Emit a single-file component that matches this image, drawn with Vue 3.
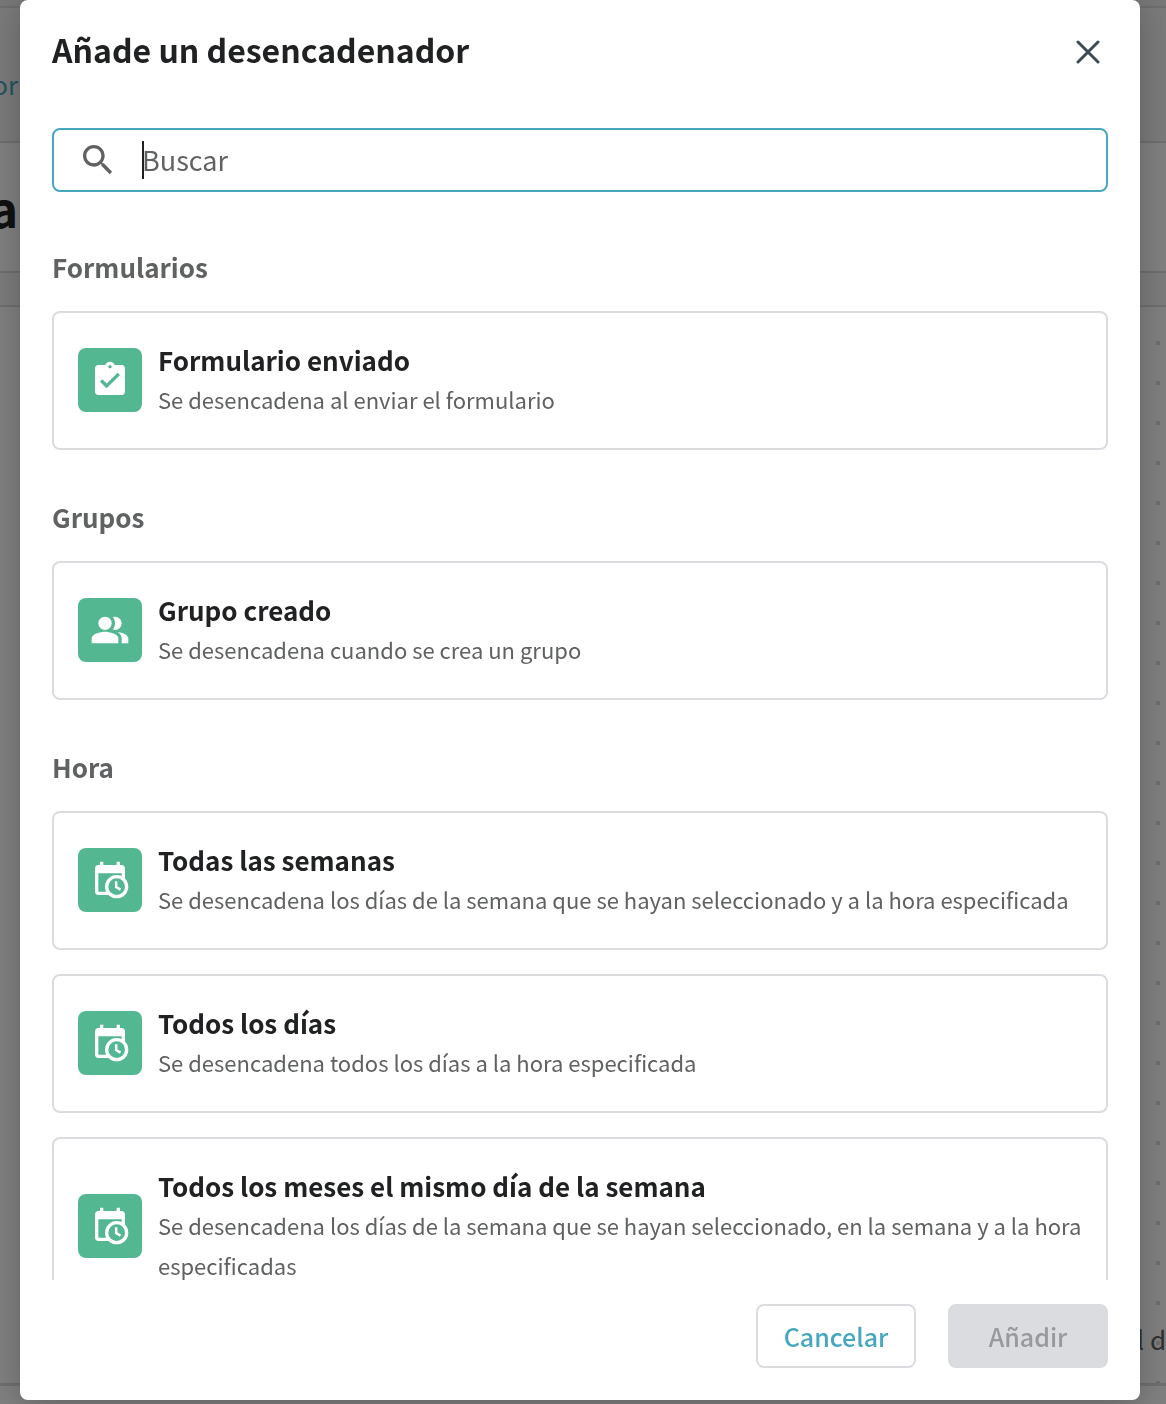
<template>
    <div class="page">
        <div class="strip"></div>
        <div class="topbar">
            <a class="crumb" href="#">or</a>
        </div>
        <div class="titlebar">
            <div class="page-title">a</div>
        </div>
        <div class="toolbar"></div>
        <div class="canvas">
            <p class="canvas-note">l d</p>
        </div>
        <div class="page-end"></div>
    </div>

    <div class="overlay">
        <section class="modal" role="dialog" aria-modal="true" aria-labelledby="modal-title">
            <header class="modal-header">
                <h1 id="modal-title">Añade un desencadenador</h1>
                <button class="close" type="button" aria-label="Cerrar">
                    <svg viewBox="0 0 24 24" width="24" height="24" aria-hidden="true">
                        <path d="M2 2L22 22M22 2L2 22" fill="none" stroke="currentColor" stroke-width="3" stroke-linecap="round" />
                    </svg>
                </button>
            </header>

            <label class="search">
                <svg class="search-icon" viewBox="0 0 24 24" width="40" height="40" aria-hidden="true">
                    <path fill="currentColor" d="M15.5 14h-.79l-.28-.27C15.41 12.59 16 11.11 16 9.5 16 5.91 13.09 3 9.5 3S3 5.91 3 9.5 5.91 16 9.5 16c1.61 0 3.09-.59 4.23-1.57l.27.28v.79l5 4.99L20.49 19l-4.99-5zm-6 0C7.01 14 5 11.99 5 9.5S7.01 5 9.5 5 14 7.01 14 9.5 11.99 14 9.5 14z" />
                </svg>
                <span class="caret"></span>
                <input v-model="query" type="text" placeholder="Buscar" aria-label="Buscar" />
            </label>

            <div class="list">
                <section v-for="group in groups" :key="group.name" class="group">
                    <h2>{{ group.name }}</h2>
                    <div class="cards">
                        <button v-for="item in group.items" :key="item.title" class="card" type="button">
                            <span class="tile">
                                <svg viewBox="0 0 24 24" width="40" height="40" fill="currentColor" aria-hidden="true">
                                    <path v-if="item.icon === 'form'" d="M19 3h-4.18C14.4 1.84 13.3 1 12 1c-1.3 0-2.4.84-2.82 2H5c-1.1 0-2 .9-2 2v14c0 1.1.9 2 2 2h14c1.1 0 2-.9 2-2V5c0-1.1-.9-2-2-2zm-7 0c.55 0 1 .45 1 1s-.45 1-1 1-1-.45-1-1 .45-1 1-1zm-2 14l-4-4 1.41-1.41L10 14.17l6.59-6.59L18 9l-8 8z" />
                                    <template v-else-if="item.icon === 'people'">
                                        <circle cx="9" cy="8" r="4" />
                                        <path d="M9 13c-2.67 0-8 1.34-8 4v3h16v-3c0-2.66-5.33-4-8-4z" />
                                        <path d="M15 12c2.21 0 4-1.79 4-4s-1.79-4-4-4c-.47 0-.91.1-1.33.24C14.5 5.27 15 6.58 15 8s-.5 2.73-1.33 3.76c.42.14.86.24 1.33.24z" />
                                        <path d="M16.67 13.13C18.04 14.06 19 15.32 19 17v3h4v-3c0-2.18-3.57-3.47-6.33-3.87z" />
                                    </template>
                                    <template v-else>
                                        <path d="M19 3h-1V1h-2v2H8V1H6v2H5c-1.1 0-2 .9-2 2v14c0 1.1.9 2 2 2h6v-2H5V8h14v3h2V5c0-1.1-.9-2-2-2z" />
                                        <circle class="clock-face" cx="16" cy="16" r="6" />
                                        <path class="clock-hands" d="M15.7 12.8v3.4l2.6 1.6" />
                                    </template>
                                </svg>
                            </span>
                            <span class="card-text">
                                <strong>{{ item.title }}</strong>
                                <span class="description">{{ item.description }}</span>
                            </span>
                        </button>
                    </div>
                </section>
            </div>

            <footer class="modal-footer">
                <button class="btn btn-cancel" type="button">Cancelar</button>
                <button class="btn btn-add" type="button" disabled>Añadir</button>
            </footer>
        </section>
    </div>
</template>

<script setup>
import { ref } from 'vue'

const query = ref('')

const groups = [
    {
        name: 'Formularios',
        items: [
            { icon: 'form', title: 'Formulario enviado', description: 'Se desencadena al enviar el formulario' }
        ]
    },
    {
        name: 'Grupos',
        items: [
            { icon: 'people', title: 'Grupo creado', description: 'Se desencadena cuando se crea un grupo' }
        ]
    },
    {
        name: 'Hora',
        items: [
            {
                icon: 'time',
                title: 'Todas las semanas',
                description: 'Se desencadena los días de la semana que se hayan seleccionado y a la hora especificada'
            },
            {
                icon: 'time',
                title: 'Todos los días',
                description: 'Se desencadena todos los días a la hora especificada'
            },
            {
                icon: 'time',
                title: 'Todos los meses el mismo día de la semana',
                description: 'Se desencadena los días de la semana que se hayan seleccionado, en la semana y a la hora especificadas'
            }
        ]
    }
]
</script>

<style>
body {
    overflow: hidden;
}
</style>

<style scoped>
.page,
.overlay {
    font-family: "Noto Sans CJK SC", "Noto Sans", sans-serif;
    box-sizing: border-box;
    height: 100vh;
}

.page *,
.overlay * {
    box-sizing: border-box;
}

/* page behind the dialog */
.page {
    display: flex;
    flex-direction: column;
    background: #fff;
}

.strip {
    height: 8px;
    background: #eee;
    border-bottom: 2px solid #dadce0;
}

.topbar,
.titlebar {
    display: flex;
    align-items: center;
    border-bottom: 2px solid #dadce0;
}

.topbar {
    height: 135px;
    padding-top: 18px;
    background: #f4f4f4;
}

.titlebar {
    height: 130px;
}

.crumb,
.page-title {
    display: flex;
    justify-content: flex-end;
    width: 18px;
}

.crumb {
    color: #48a7c0;
    font-size: 26px;
    line-height: 40px;
    text-decoration: none;
}

.page-title {
    color: #202122;
    font-size: 48px;
    line-height: 64px;
    font-weight: 700;
}

.toolbar {
    height: 34px;
    background: #f7f7f7;
    border-bottom: 2px solid #dadce0;
}

.canvas {
    flex: 1;
    display: flex;
    align-items: flex-end;
    justify-content: flex-end;
    padding: 0 0 24px;
    border-bottom: 3px solid #dadce0;
    background-image:
        linear-gradient(to right, #fff 36px, transparent 36px),
        linear-gradient(to bottom, #fff 34px, #dadce0 34px, #dadce0 38px, #fff 38px);
    background-size: 40px 40px;
}

.canvas-note {
    margin: 0;
    color: #5f6162;
    font-size: 26px;
    line-height: 40px;
}

.page-end {
    height: 18px;
}

/* dialog */
.overlay {
    position: fixed;
    inset: 0;
    padding: 0 26px 4px 20px;
    background: rgba(0, 0, 0, 0.5);
}

.modal {
    display: flex;
    flex-direction: column;
    height: 100%;
    padding: 32px;
    border-radius: 8px;
    background: #fff;
    box-shadow: 0 4px 32px rgba(0, 0, 0, 0.24);
}

.modal-header {
    display: flex;
    align-items: flex-start;
    justify-content: space-between;
    height: 40px;
    margin-bottom: 56px;
}

h1 {
    margin: 0;
    color: #202122;
    font-size: 32px;
    line-height: 34px;
    font-weight: 700;
}

button {
    font-family: inherit;
    cursor: pointer;
}

.close {
    display: flex;
    padding: 8px;
    border: 0;
    background: none;
    color: #3b4d52;
}

.search {
    display: flex;
    align-items: center;
    flex-shrink: 0;
    height: 64px;
    padding: 0 24px;
    border: 2px solid #48a7c0;
    border-radius: 8px;
}

.search-icon {
    margin-right: 24px;
    color: #5f6162;
}

.caret {
    width: 2px;
    height: 38px;
    margin-right: -2px;
    background: #202122;
}

.search input {
    flex: 1;
    min-width: 0;
    padding: 0;
    border: 0;
    outline: 0;
    background: none;
    font-family: inherit;
    font-size: 27px;
    line-height: 40px;
    color: #202122;
}

.search input::placeholder {
    color: #5f6162;
    opacity: 1;
}

.list {
    flex: 1;
    min-height: 0;
    margin-bottom: 24px;
    padding-top: 8px;
    overflow-y: auto;
    scrollbar-width: none;
}

.group {
    padding-top: 48px;
}

h2 {
    margin: 0 0 25px;
    color: #5f6162;
    font-size: 26px;
    line-height: 38px;
    font-weight: 700;
}

.cards {
    display: flex;
    flex-direction: column;
    gap: 24px;
}

.card {
    display: flex;
    align-items: center;
    gap: 16px;
    width: 100%;
    padding: 28px 24px 29px;
    border: 2px solid #dadce0;
    border-radius: 8px;
    background: #fff;
    text-align: left;
}

.tile {
    display: flex;
    align-items: center;
    justify-content: center;
    flex-shrink: 0;
    width: 64px;
    height: 64px;
    border-radius: 8px;
    background: #53b792;
    color: #fff;
}

.clock-face {
    fill: #53b792;
    stroke: #fff;
    stroke-width: 2;
}

.clock-hands {
    fill: none;
    stroke: #fff;
    stroke-width: 1.5;
}

.card-text {
    display: flex;
    flex-direction: column;
}

.card-text strong {
    color: #202122;
    font-size: 26px;
    line-height: 38px;
    font-weight: 700;
}

.description {
    color: #5f6162;
    font-size: 22px;
    line-height: 40px;
}

.modal-footer {
    display: flex;
    justify-content: flex-end;
    gap: 32px;
}

.btn {
    width: 160px;
    height: 64px;
    padding: 0;
    border: 2px solid #dadce0;
    border-radius: 8px;
    font-size: 25px;
    line-height: 40px;
    font-weight: 500;
}

.btn-cancel {
    background: #fff;
    color: #48a7c0;
}

.btn-add {
    background: #dadce0;
    color: #97999c;
    cursor: default;
}
</style>
